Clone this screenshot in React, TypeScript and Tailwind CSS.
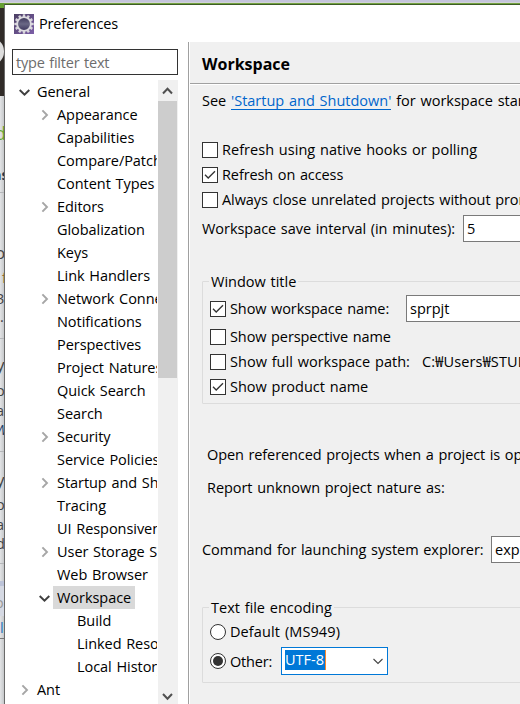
import React from "react";

type Item = { label: string; level: number; arrow?: "open" | "closed"; selected?: boolean };

const items: Item[] = [
  { label: "General", level: 0, arrow: "open" },
  { label: "Appearance", level: 1, arrow: "closed" },
  { label: "Capabilities", level: 1 },
  { label: "Compare/Patch", level: 1 },
  { label: "Content Types", level: 1 },
  { label: "Editors", level: 1, arrow: "closed" },
  { label: "Globalization", level: 1 },
  { label: "Keys", level: 1 },
  { label: "Link Handlers", level: 1 },
  { label: "Network Connections", level: 1, arrow: "closed" },
  { label: "Notifications", level: 1 },
  { label: "Perspectives", level: 1 },
  { label: "Project Natures", level: 1 },
  { label: "Quick Search", level: 1 },
  { label: "Search", level: 1 },
  { label: "Security", level: 1, arrow: "closed" },
  { label: "Service Policies", level: 1 },
  { label: "Startup and Shutdown", level: 1, arrow: "closed" },
  { label: "Tracing", level: 1 },
  { label: "UI Responsiveness", level: 1 },
  { label: "User Storage Service", level: 1, arrow: "closed" },
  { label: "Web Browser", level: 1 },
  { label: "Workspace", level: 1, arrow: "open", selected: true },
  { label: "Build", level: 2 },
  { label: "Linked Resources", level: 2 },
  { label: "Local History", level: 2 },
  { label: "Ant", level: 0, arrow: "closed" },
];

const indents = ["pl-[14px]", "pl-[34px]", "pl-[54px]"];

function Arrow({ kind }: { kind?: "open" | "closed" }) {
  return (
    <svg width="12" height="12" viewBox="0 0 12 12" fill="none" className="shrink-0">
      {kind === "open" && <path d="M0.7 4 L5.5 8.6 L10.3 4" stroke="#404040" strokeWidth="2" />}
      {kind === "closed" && <path d="M3.4 1.3 L8 6 L3.4 10.7" stroke="#a6a6a6" strokeWidth="1.9" />}
    </svg>
  );
}

function Gear() {
  const teeth = Array.from({ length: 12 }, (_, i) => i * 30);
  return (
    <svg width="20" height="20" viewBox="0 0 20 20" className="shrink-0">
      <defs>
        <linearGradient id="plum" x1="0" y1="0" x2="1" y2="1">
          <stop offset="0" stopColor="#4b3f63" />
          <stop offset="1" stopColor="#7d5fa8" />
        </linearGradient>
        <linearGradient id="core" x1="0" y1="0" x2="0" y2="1">
          <stop offset="0" stopColor="#3a3458" />
          <stop offset="0.5" stopColor="#6a6885" />
          <stop offset="1" stopColor="#39325a" />
        </linearGradient>
      </defs>
      <rect width="20" height="20" fill="url(#plum)" />
      {teeth.map((a) => (
        <rect key={a} x="8.8" y="0.3" width="2.4" height="3.4" fill="#d8d6dc" transform={`rotate(${a} 10 10)`} />
      ))}
      <circle cx="10" cy="10" r="6.9" fill="url(#core)" stroke="#dcdadf" strokeWidth="1.9" />
    </svg>
  );
}

function Check({ on, label, className = "" }: { on?: boolean; label: string; className?: string }) {
  return (
    <div className={`flex items-center whitespace-pre ${className}`}>
      <span className="block h-4 w-4 shrink-0 border border-[#333] bg-white">
        {on && (
          <svg width="14" height="14" viewBox="0 0 14 14" fill="none">
            <path d="M2 6.7 L5.2 10 L12 3.2" stroke="#333" strokeWidth="1.3" />
          </svg>
        )}
      </span>
      <span className="ml-1">{label}</span>
    </div>
  );
}

export default function App() {
  return (
    <div className="flex h-[704px] w-[520px] flex-col overflow-hidden bg-white font-['Open_Sans','Noto_Sans_CJK_KR',sans-serif] text-[14.5px] leading-[23px] text-black">
      <div className="h-[2px] shrink-0 bg-[#c5c5dc]" />
      <div className="h-px shrink-0 bg-[#d2d2da]" />
      <div className="flex h-[701px]">
        <Backdrop />
        <div className="flex w-[516px] flex-col">
          <div className="h-px shrink-0 bg-[#74a240]" />
          <div className="flex h-[700px] flex-col overflow-hidden border-l border-t border-l-[#6a6a6a] border-t-[#3d5c26] bg-white">
            <header className="flex h-[37px] shrink-0 items-center pl-[9px]">
              <Gear />
              <span className="ml-[5px] tracking-[-0.15px]">Preferences</span>
            </header>
            <div className="flex h-[662px]">
              <aside className="flex w-[183px] shrink-0 flex-col pl-[7px] pt-[7px]">
                <div className="flex h-[26px] w-[166px] shrink-0 items-center border border-[#333] pl-[3px] tracking-[-0.2px] text-[#6d6d6d] [word-spacing:1px]">
                  type filter text
                </div>
                <div className="mt-[5px] flex h-[624px] w-[166px]">
                  <div className="mr-px w-[145px] shrink-0 overflow-hidden">
                    {items.map((it) => (
                      <div key={it.label} className={`-ml-[7px] flex h-[23px] items-center whitespace-pre tracking-[-0.05px] [word-spacing:1px] ${indents[it.level]}`}>
                        <Arrow kind={it.arrow} />
                        <span className={`ml-[2px] px-[4px] ${it.selected ? "bg-[#d9d9d9]" : ""}`}>{it.label}</span>
                      </div>
                    ))}
                  </div>
                  <div className="flex w-5 shrink-0 flex-col bg-[#f0f0f0]">
                    <div className="flex h-[21px] shrink-0 items-center justify-center">
                      <svg width="12" height="12" viewBox="0 0 12 12" fill="none"><path d="M1 8.5 L5.5 3.8 L10 8.5" stroke="#505050" strokeWidth="2" /></svg>
                    </div>
                    <div className="h-[277px] w-[19px] bg-[#cdcdcd]" />
                    <div className="mt-auto flex h-[15px] items-center justify-center">
                      <svg width="12" height="12" viewBox="0 0 12 12" fill="none"><path d="M1 3 L5.5 7.7 L10 3" stroke="#505050" strokeWidth="2" /></svg>
                    </div>
                  </div>
                </div>
              </aside>
              <main className="flex grow flex-col overflow-hidden whitespace-pre border-l border-[#a0a0a0] bg-[#f0f0f0]">
                <div className="flex h-[662px] flex-col border-l border-white">
                  <h1 className="flex h-[42px] shrink-0 items-center border-b border-[#a0a0a0] pl-[12px] pt-[3px] text-[16px] font-bold">Workspace</h1>
                  <div className="flex flex-col border-t border-white pl-[12px] [word-spacing:1px]">
                    <p className="mt-[4px] h-[23px]">See <span className="inline-block h-[21px] border-b border-[#0066cc] leading-[23px] text-[#0066cc]">'Startup and Shutdown'</span> for workspace startup and shutdown preferences.</p>
                    <Check label="Refresh using native hooks or polling" className="mt-[25px] h-[25px] tracking-[0.03px]" />
                    <Check on label="Refresh on access" className="h-[25px] tracking-[-0.1px]" />
                    <Check label="Always close unrelated projects without prompt" className="h-[25px] tracking-[-0.08px]" />
                    <div className="mt-[3px] flex h-[27px] items-center">
                      <span className="w-[261px] shrink-0 tracking-[-0.05px]">Workspace save interval (in minutes):</span>
                      <span className="h-[27px] w-[100px] shrink-0 border border-[#7a7a7a] bg-white pl-[3px] leading-[26px]">5</span>
                    </div>
                    <fieldset className="relative mt-[39px] h-[123px] w-[400px] rounded-[1px] border border-[#dcdcdc] pl-[7px]">
                      <span className="absolute -top-[12px] left-[6px] bg-[#f0f0f0] px-[2px]">Window title</span>
                      <div className="mt-[13px] flex h-[27px] items-center">
                        <Check on label="Show workspace name:" className="w-[196px] shrink-0 tracking-[-0.1px]" />
                        <span className="h-[27px] w-[200px] shrink-0 border border-[#7a7a7a] bg-white pl-[3px] leading-[26px]">sprpjt</span>
                      </div>
                      <Check label="Show perspective name" className="mt-[2px] h-[25px] tracking-[-0.1px]" />
                      <div className="flex">
                        <Check label="Show full workspace path:" className="h-[25px] w-[212px] shrink-0 tracking-[0.02px]" />
                        <span className="leading-[25px] tracking-[0.15px]">C:₩Users₩STUDENT</span>
                      </div>
                      <Check on label="Show product name" className="h-[25px]" />
                    </fieldset>
                    <p className="mt-[39px] pl-[5px] tracking-[-0.1px]">Open referenced projects when a project is opened</p>
                    <p className="mt-[10px] pl-[5px] tracking-[-0.05px]">Report unknown project nature as:</p>
                    <div className="mt-[37px] flex h-[27px] items-center">
                      <span className="w-[289px] shrink-0 tracking-[-0.05px]">Command for launching system explorer:</span>
                      <span className="h-[27px] w-[100px] shrink-0 border border-[#7a7a7a] bg-white pl-[3px] leading-[26px]">explorer</span>
                    </div>
                    <fieldset className="relative mt-[44px] h-[76px] w-[400px] rounded-[1px] border border-[#dcdcdc] pl-[7px]">
                      <span className="absolute -top-[12px] left-[6px] bg-[#f0f0f0] px-[2px]">Text file encoding</span>
                      <div className="mt-[11px] flex h-[25px] items-center">
                        <span className="h-4 w-4 rounded-full border border-[#333] bg-white" />
                        <span className="ml-1 tracking-[0.1px]">Default (MS949)</span>
                      </div>
                      <div className="mt-[3px] flex h-[28px] items-center">
                        <span className="flex h-4 w-4 items-center justify-center rounded-full border border-[#333] bg-white"><span className="h-[10px] w-[10px] rounded-full bg-[#333]" /></span>
                        <span className="ml-1 w-[51px] tracking-[-0.2px]">Other:</span>
                        <div className="flex h-[28px] w-[107px] items-center justify-between border border-[#0078d7] bg-white pl-[3px] pr-[3px]">
                          <span className="mb-[2px] h-5 w-[41px] border-r border-[#ff8728] bg-[#0078d7] leading-[20px] text-white">UTF-8</span>
                          <svg width="12" height="12" viewBox="0 0 12 12" fill="none"><path d="M1.5 4 L6 8.5 L10.5 4" stroke="#444" strokeWidth="1.1" /></svg>
                        </div>
                      </div>
                    </fieldset>
                  </div>
                </div>
              </main>
            </div>
          </div>
        </div>
      </div>
    </div>
  );
}

function Backdrop() {
  return (
    <div className="flex h-[701px] w-1 shrink-0 flex-col overflow-hidden whitespace-pre bg-gradient-to-r from-[#e3e4e6] to-[#c6c8ca] text-[#444] *:shrink-0">
      <div className="h-[5px] bg-[#66a033]" />
      <div className="h-[88px] overflow-hidden bg-[#302b28] pt-[30px]">
        <div className="-ml-[22px] h-[27px] w-[26px] rounded-full border-4 border-[#ddd]" />
      </div>
      <div className="mt-[26px] h-[23px]"><span className="-ml-[5px] text-[18px] text-[#67a832]">d</span></div>
      <div className="mt-[18px] h-[30px] border-b border-[#b5b7ba] leading-[23px]"><span className="-ml-[8px] font-bold text-[#24344d]">ns</span></div>
      <div className="mt-[48px] h-[23px]"><span className="-ml-[5px] text-[17px]">o</span></div>
      <div className="mt-[2px] h-[21px]"><span className="ml-[2px] text-[#9a6a2a]">f</span></div>
      <div className="h-[22px]"><span className="-ml-[4px]">3</span></div>
      <div className="h-[29px] leading-[16px]">.</div>
      <div className="h-px bg-[#b5b7ba]" />
      <div className="mt-[14px] h-[23px]"><span className="-ml-[4px] text-[17px]">y</span></div>
      <div className="mt-[3px] h-[20px]"><span className="-ml-[4px]">o</span></div>
      <div className="h-[19px]"><span className="-ml-[4px]">a</span></div>
      <div className="h-[22px]"><span className="-ml-[5px] italic text-[#24446d]">W</span></div>
      <div className="mt-[11px] h-px bg-[#b5b7ba]" />
      <div className="mt-[16px] h-[23px]"><span className="-ml-[4px] text-[17px]">y</span></div>
      <div className="mt-[2px] h-[20px]"><span className="-ml-[4px]">o</span></div>
      <div className="h-[19px]"><span className="-ml-[4px]">a</span></div>
      <div className="h-[22px]"><span className="-ml-[4px]">d</span></div>
      <div className="mt-[9px] h-px bg-[#b5b7ba]" />
      <div className="mt-[17px] h-[5px] bg-[#bcc3d8]" />
      <div className="h-[30px] bg-[#d5d9e3] pt-[5px]"><span className="-ml-[5px] text-[#999]">o</span></div>
      <div className="h-[22px]"><span className="text-[#2a78c0]">l</span></div>
      <div className="h-px bg-[#777]" />
    </div>
  );
}
